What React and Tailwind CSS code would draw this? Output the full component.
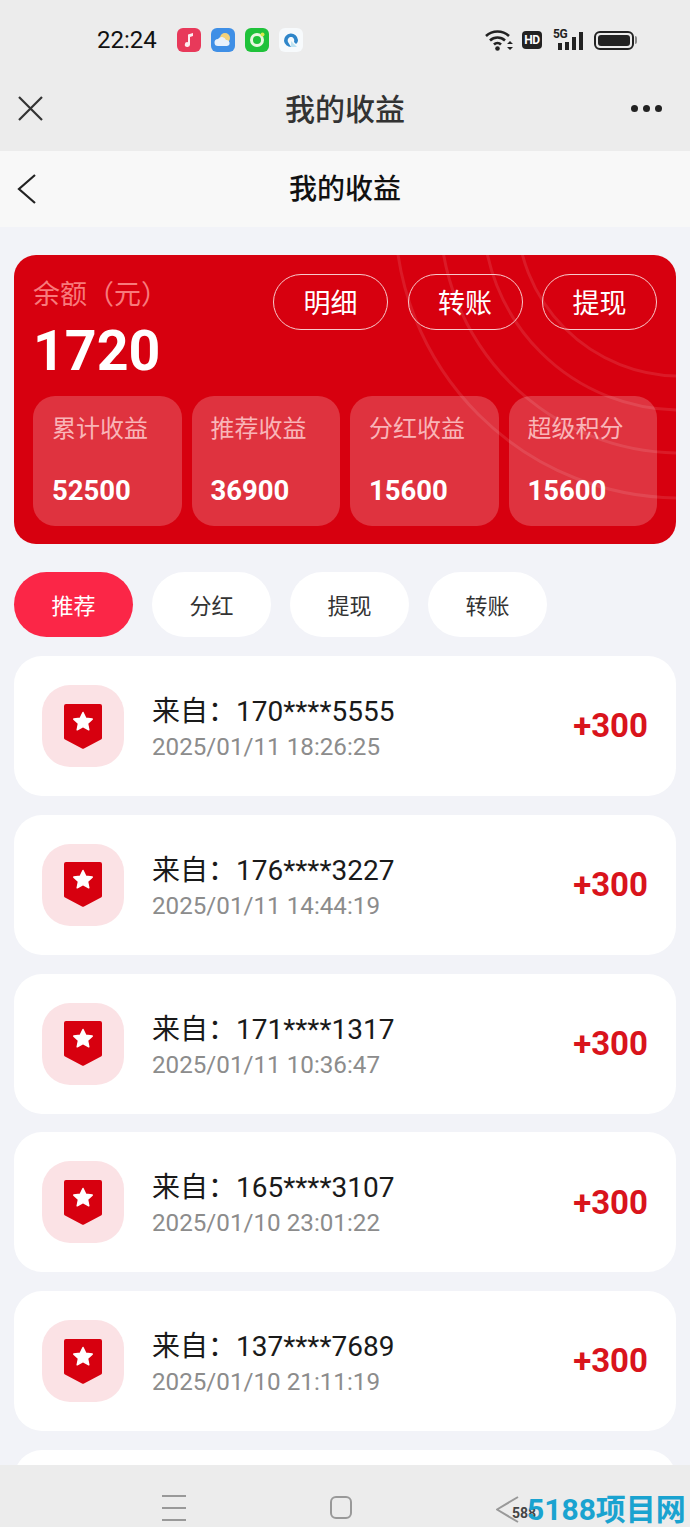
import React from 'react';

const cjk = '"Noto Sans CJK SC", sans-serif';

const stats = [
  { label: '累计收益', value: '52500' },
  { label: '推荐收益', value: '36900' },
  { label: '分红收益', value: '15600' },
  { label: '超级积分', value: '15600' },
];

const records = [
  { phone: '170****5555', time: '2025/01/11 18:26:25' },
  { phone: '176****3227', time: '2025/01/11 14:44:19' },
  { phone: '171****1317', time: '2025/01/11 10:36:47' },
  { phone: '165****3107', time: '2025/01/10 23:01:22' },
  { phone: '137****7689', time: '2025/01/10 21:11:19' },
];

function StatusIcons() {
  return (
    <div className="flex items-center gap-[10px]">
      <div className="w-[24px] h-[24px] rounded-[6px] bg-[#e8395a] flex items-center justify-center">
        <svg width="14" height="16" viewBox="0 0 14 16">
          <path d="M6 2.500 11 1v3L8 5v7.500a2.600 2.400 0 1 1-2-2.300z" fill="#fff" opacity="0.9" />
        </svg>
      </div>
      <div className="w-[24px] h-[24px] rounded-[6px] bg-[#3f8fe6] flex items-center justify-center">
        <svg width="20" height="18" viewBox="0 0 20 18">
          <circle cx="12" cy="7" r="5" fill="#f3d27a" />
          <path d="M5 15a3.500 3.500 0 0 1 0-7 4.500 4.500 0 0 1 8 1 3 3 0 0 1 1 6z" fill="#e8f1fb" />
        </svg>
      </div>
      <div className="w-[24px] h-[24px] rounded-[6px] bg-[#1fc23a] flex items-center justify-center">
        <svg width="20" height="20" viewBox="0 0 20 20">
          <circle cx="10" cy="10" r="5.500" fill="none" stroke="#e8f7e0" strokeWidth="3" />
          <circle cx="15.500" cy="4.500" r="2" fill="#d9e84a" />
        </svg>
      </div>
      <div className="w-[24px] h-[24px] rounded-[6px] bg-[#f7fafc] flex items-center justify-center">
        <svg width="20" height="20" viewBox="0 0 20 20">
          <path d="M3 11a7 7 0 0 1 14-1c0 2-1 3-2 4l-2-2c1-3-1-5-3-5s-4 2-3 5l3 5a7 7 0 0 1-7-6z" fill="#2f86c9" />
          <path d="M10 11l6 6H10z" fill="#bfe3f2" />
        </svg>
      </div>
    </div>
  );
}

function SystemIcons() {
  return (
    <div className="flex items-center">
      <svg width="28" height="22" viewBox="0 0 28 22" fill="none" stroke="#222" strokeWidth="2.600">
        <path d="M1 7a17 17 0 0 1 23 0" />
        <path d="M5 11.500a11 11 0 0 1 15 0" />
        <path d="M9 15.500a5 5 0 0 1 7 0" />
        <circle cx="12.500" cy="19.500" r="2.300" fill="#222" stroke="none" />
        <path d="M22 15l3-3 3 3zM22 18l3 3 3-3z" fill="#222" stroke="none" />
      </svg>
      <div className="ml-[9px] w-[20px] h-[18px] rounded-[4px] bg-[#222] text-white text-[12px] leading-[18px] font-bold text-center font-['Roboto',sans-serif] tracking-[-0.5px]">
        HD
      </div>
      <div className="ml-[11px] relative w-[30px] h-[20px]">
        <span className="absolute left-0 top-[-2px] text-[12px] leading-[12px] font-bold text-[#222] font-['Roboto',sans-serif] tracking-[-0.5px]">5G</span>
        <div className="absolute inset-0 flex items-end justify-end gap-[3px]">
          <div className="w-[4px] h-[7px] bg-[#222]" />
          <div className="w-[4px] h-[8px] bg-[#222]" />
          <div className="w-[4px] h-[13px] bg-[#222]" />
          <div className="w-[4px] h-[18px] bg-[#222]" />
        </div>
      </div>
      <div className="ml-[11px] flex items-center">
        <div className="w-[40px] h-[19px] rounded-[6px] border-2 border-[#222] p-[2px]">
          <div className="w-full h-full rounded-[3px] bg-[#222]" />
        </div>
        <div className="w-[2px] h-[8px] ml-[1px] bg-[#888] rounded-r-sm" />
      </div>
    </div>
  );
}

function BadgeIcon() {
  return (
    <div className="w-[82px] h-[82px] rounded-[28px] bg-[#fbe2e5] flex items-center justify-center shrink-0">
      <svg width="38" height="45" viewBox="0 0 38 45">
        <path d="M2 0h34a2 2 0 0 1 2 2v32a2 2 0 0 1-1 1.600L20 44.500a2 2 0 0 1-2 0L1 35.600A2 2 0 0 1 0 34V2a2 2 0 0 1 2-2z" fill="#d7000f" />
        <path d="M19 8.500l2.800 5.800 6.400.8-4.700 4.400 1.300 6.300-5.800-3.200-5.800 3.200 1.300-6.300-4.700-4.400 6.400-.8z" fill="#fff" stroke="#fff" strokeWidth="1.500" strokeLinejoin="round" />
      </svg>
    </div>
  );
}

function RecordRow({ phone, time }) {
  return (
    <div className="h-[140px] shrink-0 rounded-[28px] bg-white flex items-center pl-[28px] pr-[28px]">
      <BadgeIcon />
      <div className="ml-[28px] pt-[2px] flex-1 font-['Roboto',sans-serif]">
        <div className="text-[28px] leading-[36px] text-[#1a1a1a]">
          <span className="font-['Noto_Sans_CJK_SC',sans-serif]">来自：</span>{phone}
        </div>
        <div className="text-[24.2px] leading-[32px] text-[#8c8c8c] mt-[1px]">{time}</div>
      </div>
      <div className="text-[33px] font-bold text-[#d9141c] font-['Roboto',sans-serif]">+300</div>
    </div>
  );
}

export default function App() {
  return (
    <div className="w-[690px] h-[1527px] overflow-hidden flex flex-col bg-[#f2f3f8]" style={{ fontFamily: cjk }}>
      <div className="h-[151px] shrink-0 bg-[#ececec]">
        <div className="h-[79px] pl-[97px] pr-[53px] pt-[24px]">
          <div className="h-[32px] flex items-center">
            <div className="text-[24px] leading-[32px] text-[#111] font-['Roboto',sans-serif] w-[80px]">22:24</div>
            <StatusIcons />
            <div className="ml-auto"><SystemIcons /></div>
          </div>
        </div>
        <div className="relative h-[62px] pb-[6px] flex items-center justify-center">
          <svg className="absolute left-[17px] top-[16px]" width="27" height="27" viewBox="0 0 27 27" fill="none" stroke="#333" strokeWidth="2.200">
            <path d="M2 2l23 23M25 2L2 25" />
          </svg>
          <span className="text-[30px] text-[#333] font-medium leading-[40px]">我的收益</span>
          <div className="absolute right-[28px] top-[26px] flex gap-[5px]">
            <div className="w-[7px] h-[7px] rounded-full bg-[#222]" />
            <div className="w-[7px] h-[7px] rounded-full bg-[#222]" />
            <div className="w-[7px] h-[7px] rounded-full bg-[#222]" />
          </div>
        </div>
      </div>

      <div className="h-[76px] shrink-0 pb-[4px] bg-[#f8f8f8] relative flex items-center justify-center">
        <svg className="absolute left-[17px] top-[23px]" width="20" height="30" viewBox="0 0 20 30" fill="none" stroke="#222" strokeWidth="2.200">
          <path d="M18 1L2 15l16 14" />
        </svg>
        <span className="text-[28px] font-medium text-[#111] leading-[38px]">我的收益</span>
      </div>

      <div className="flex-1 min-h-0 overflow-hidden px-[14px] pt-[28px]">
        <div className="relative h-[289px] rounded-[22px] bg-[#d7000f] overflow-hidden px-[19px] pt-[19px]">
          <svg className="absolute left-0 top-0" width="662" height="289" viewBox="0 0 662 289" fill="none" stroke="#fff" strokeOpacity="0.1" strokeWidth="3">
            <circle cx="666" cy="-42" r="163" />
            <circle cx="666" cy="-42" r="197" />
            <circle cx="666" cy="-42" r="240" />
            <circle cx="666" cy="-42" r="285" />
          </svg>
          <div className="relative flex justify-between">
            <div>
              <div className="text-[27px] leading-[38px] text-[#f87a7c]">余额（元）</div>
              <div className="mt-[10px] text-[55.500px] leading-[60px] font-bold text-white font-['Roboto',sans-serif]">1720</div>
            </div>
            <div className="flex gap-[19.5px]">
              {['明细', '转账', '提现'].map(t => (
                <div key={t} className="w-[115px] h-[56px] rounded-full border-[1.5px] border-[#f8c9cb] flex items-center justify-center text-[27px] text-white">
                  {t}
                </div>
              ))}
            </div>
          </div>
          <div className="relative mt-[14px] grid grid-cols-4 gap-[10px]">
            {stats.map(s => (
              <div key={s.label} className="h-[130px] rounded-[22px] bg-white/20 pl-[19px] pt-[14px]">
                <div className="text-[24px] leading-[34px] text-[#f9b5b8]">{s.label}</div>
                <div className="mt-[29px] text-[27.500px] leading-[36px] font-bold text-white font-['Roboto',sans-serif]">{s.value}</div>
              </div>
            ))}
          </div>
        </div>

        <div className="mt-[28px] flex gap-[19px]">
          {['推荐', '分红', '提现', '转账'].map((t, i) => (
            <div
              key={t}
              className={i === 0
                ? 'w-[119px] h-[65px] rounded-full bg-[#fb2647] text-white text-[22px] flex items-center justify-center'
                : 'w-[119px] h-[65px] rounded-full bg-white text-[#333] text-[22px] flex items-center justify-center'}
            >
              {t}
            </div>
          ))}
        </div>

        <div className="mt-[19px] flex flex-col gap-[18.750px]">
          {records.map(r => (
            <RecordRow key={r.phone} phone={r.phone} time={r.time} />
          ))}
          <div className="h-[140px] shrink-0 rounded-[28px] bg-white" />
        </div>
      </div>

      <div className="relative h-[62px] shrink-0 bg-[#ececec]">
        <div className="absolute left-[162px] top-[30px] w-[24px] flex flex-col gap-[10px]">
          <div className="h-[2px] bg-[#999]" />
          <div className="h-[2px] bg-[#999]" />
          <div className="h-[2px] bg-[#999]" />
        </div>
        <div className="absolute left-[330px] top-[31px] w-[22px] h-[23px] rounded-[6px] border-2 border-[#999]" />
        <svg className="absolute left-[495px] top-[31px]" width="26" height="27" viewBox="0 0 26 27" fill="none" stroke="#999" strokeWidth="2" strokeLinejoin="round">
          <path d="M23 1L2 13.500l21 12.500" />
        </svg>
        <div className="absolute left-[512px] top-[40px] text-[14px] leading-[16px] font-bold text-[#444] font-['Roboto',sans-serif]">588</div>
        <div className="absolute left-[527px] top-[28px] text-[30px] leading-[34px] font-bold text-[#1aa3d0] whitespace-nowrap font-['Roboto','Noto_Sans_CJK_SC',sans-serif]">
          5188项目网
        </div>
      </div>
    </div>
  );
}
